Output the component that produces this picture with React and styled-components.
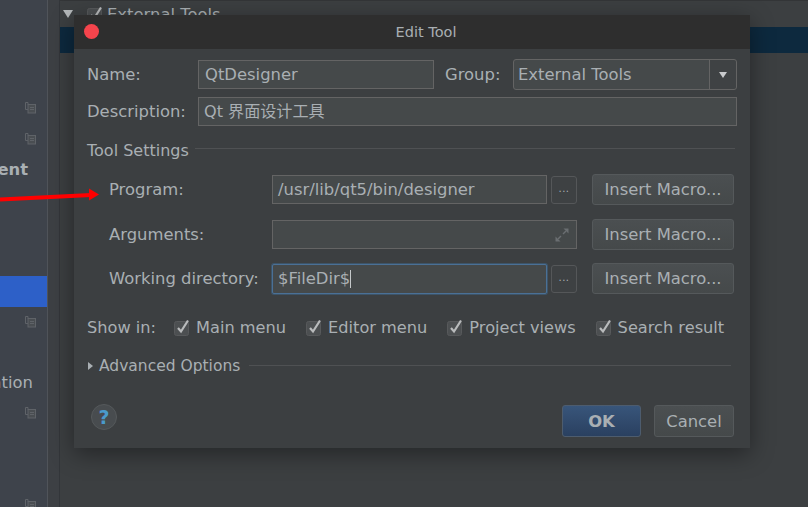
import React from 'react';
import styled, { createGlobalStyle } from 'styled-components';

const GlobalStyle = createGlobalStyle`
  html, body { margin: 0; padding: 0; background: #3c3f41; }
  body { font-family: "DejaVu Sans", "Noto Sans CJK SC", sans-serif; }
`;

const Page = styled.div`
  position: relative;
  display: flex;
  width: 808px;
  height: 507px;
  overflow: hidden;
  background: #3c3f41;
  color: #a9afb3;
  font-size: 16.4px;
`;

const Sidebar = styled.div`
  box-sizing: border-box;
  flex: 0 0 48px;
  min-width: 0;
  padding-top: 93px;
  background: #3e434b;
  border-right: 1px solid #50545a;
`;

const SideRow = styled.div`
  display: flex;
  justify-content: flex-end;
  align-items: center;
  height: 30.5px;
  padding-right: ${(p) => p.$right}px;
  overflow: hidden;
  white-space: nowrap;
  font-weight: ${(p) => (p.$bold ? 700 : 400)};
  background: ${(p) => (p.$selected ? '#2d60c8' : 'transparent')};
`;

const Gutter = styled.div`
  box-sizing: border-box;
  flex: 0 0 12px;
  border-right: 1px solid #33363a;
  background: #3d4044;
`;

const Main = styled.div`
  flex: 1;
  min-width: 0;
  border-top: 1px solid #333537;
`;

const TreeRow = styled.div`
  display: flex;
  align-items: center;
  gap: 4px;
  height: 26px;
  padding-left: 3px;
`;

const TreeArrow = styled.span`
  width: 0;
  height: 0;
  margin-right: 10px;
  border-left: 5px solid transparent;
  border-right: 5px solid transparent;
  border-top: 8px solid #b4b8ba;
`;

const SelectedRow = styled.div`
  height: 26px;
  background: #0d293e;
`;

const Arrow = styled.svg`
  position: absolute;
  left: 0;
  top: 185px;
`;

const Dialog = styled.div`
  position: absolute;
  left: 74px;
  top: 15px;
  width: 676px;
  height: 433px;
  display: flex;
  flex-direction: column;
  background: #3c3f41;
  box-shadow: 0 6px 22px rgba(0, 0, 0, 0.4);
`;

const TitleBar = styled.div`
  position: relative;
  box-sizing: border-box;
  flex: 0 0 34px;
  display: flex;
  align-items: center;
  justify-content: center;
  padding-left: 28px;
  background: #2e2e2e;
  font-size: 14.5px;
`;

const CloseDot = styled.span`
  position: absolute;
  left: 10px;
  top: 9px;
  width: 15px;
  height: 15px;
  border-radius: 50%;
  background: #f5444c;
`;

const Form = styled.div`
  flex: 1;
  display: flex;
  flex-direction: column;
  padding: 10px 13px 10px;
`;

const Row = styled.div`
  display: flex;
  align-items: center;
  height: 31px;
  margin-top: ${(p) => p.$top || 0}px;
`;

const Label = styled.span`
  flex: 0 0 ${(p) => p.$width}px;
  margin-left: ${(p) => p.$left || 0}px;
  white-space: nowrap;
`;

const Input = styled.div`
  position: relative;
  box-sizing: border-box;
  display: flex;
  align-items: center;
  flex: ${(p) => (p.$width ? `0 0 ${p.$width}px` : '1')};
  height: ${(p) => (p.$focused ? 30 : 29)}px;
  padding-left: ${(p) => (p.$width === 236 ? 6 : 5)}px;
  padding-bottom: ${(p) => p.$lift || 0}px;
  background: #45494a;
  border: 1px solid ${(p) => (p.$focused ? '#4a7096' : '#646464')};
  border-radius: ${(p) => (p.$focused ? '2px' : 0)};
  box-shadow: ${(p) => (p.$focused ? '0 0 0 1px #3d5468' : 'none')};
  font-size: ${(p) => p.$size || 16.4}px;
  white-space: nowrap;
`;

const Caret = styled.span`
  width: 1px;
  height: 18px;
  background: #c4c8ca;
`;

const Select = styled.div`
  box-sizing: border-box;
  flex: 1;
  display: flex;
  align-items: center;
  height: 31px;
  background: #45494a;
  border: 1px solid #646464;
  border-radius: 3px;
  padding-left: 4px;
`;

const SelectValue = styled.span`
  flex: 1;
`;

const SelectButton = styled.span`
  flex: 0 0 26px;
  align-self: stretch;
  display: flex;
  align-items: center;
  justify-content: center;
  background: #3f4244;
  border-left: 1px solid #646464;
  border-radius: 0 3px 3px 0;

  &::after {
    content: '';
    border-left: 4.5px solid transparent;
    border-right: 4.5px solid transparent;
    border-top: 6px solid #c8cacc;
  }
`;

const SectionTitle = styled.div`
  display: flex;
  align-items: center;
  height: 20px;
  margin-top: ${(p) => p.$top}px;
  margin-right: ${(p) => p.$right}px;
  font-size: ${(p) => p.$size}px;
  white-space: nowrap;

  &::after {
    content: '';
    flex: 1;
    height: 1px;
    margin-left: ${(p) => p.$gap}px;
    margin-top: ${(p) => p.$lineShift}px;
    background: #4f5153;
  }
`;

const Expander = styled.span`
  width: 0;
  height: 0;
  margin: 0 6px 0 1px;
  border-top: 4px solid transparent;
  border-bottom: 4px solid transparent;
  border-left: 5px solid #a9afb3;
`;

const SettingsGrid = styled.div`
  display: grid;
  grid-template-columns: 148px 305px 142px;
  grid-auto-rows: 31px;
  column-gap: 15px;
  row-gap: 13.5px;
  align-items: center;
  margin-top: 14px;
  margin-left: 22px;
`;

const GridLabel = styled.span`
  white-space: nowrap;
`;

const FieldCell = styled.div`
  display: flex;
  align-items: center;
  gap: 4px;
`;

const DotsButton = styled.span`
  box-sizing: border-box;
  flex: 0 0 26px;
  height: 28px;
  display: flex;
  align-items: center;
  justify-content: center;
  border: 1px solid #555759;
  border-radius: 3px;
  background: #3e4143;
  font-size: 10px;
  letter-spacing: 0.5px;
  padding-bottom: 3px;
`;

const Button = styled.button`
  box-sizing: border-box;
  height: ${(p) => p.$height || 31}px;
  width: ${(p) => p.$width}px;
  margin-left: ${(p) => p.$left || 0}px;
  padding: 0;
  font: inherit;
  font-weight: ${(p) => (p.$primary ? 700 : 400)};
  color: #a9afb3;
  background: ${(p) =>
    p.$primary
      ? 'linear-gradient(#38557a, #2a4060)'
      : 'linear-gradient(#4b4f51, #45494a)'};
  border: 1px solid ${(p) => (p.$primary ? '#4d5c6e' : '#55595b')};
  border-radius: 3px;
  white-space: nowrap;
`;

const ShowRow = styled.div`
  display: flex;
  align-items: center;
  gap: 20px;
  height: 20px;
  margin-top: 23px;
  font-size: 16.2px;
`;

const ShowLabel = styled.span`
  flex: 0 0 67px;
  min-width: 0;
  white-space: nowrap;
`;

const CheckItem = styled.span`
  display: flex;
  align-items: center;
  gap: 6px;
  white-space: nowrap;
`;

const Footer = styled.div`
  display: flex;
  align-items: center;
  margin-top: auto;
  padding-right: 3px;
`;

const Help = styled.span`
  box-sizing: border-box;
  display: flex;
  align-items: center;
  justify-content: center;
  width: 26px;
  height: 26px;
  margin: 0 auto 8px 4px;
  border-radius: 50%;
  background: #484c4f;
  border: 1px solid #55595b;
  color: #4a9bcb;
  font-weight: 700;
  font-size: 19px;
`;

const CopyIcon = () => (
  <svg width="11" height="12" viewBox="0 0 11 12" fill="none" stroke="#5f6368">
    <path d="M3 2.5V.5H.5v7H3" />
    <rect x="3" y="2.5" width="7.5" height="8.5" fill="#4a4e52" />
    <path d="M5 5.5h4M5 7.5h4" />
  </svg>
);

const CheckBox = () => (
  <svg width="16" height="17" viewBox="0 0 16 17" fill="none">
    <rect x=".5" y="2.5" width="14" height="14" rx="2" fill="#4c4f51" stroke="#57595b" />
    <path d="M4 9l3 3.5L14 1.5" stroke="#b9bbbc" strokeWidth="2.2" />
  </svg>
);

const ExpandIcon = styled.svg`
  position: absolute;
  right: 6px;
  top: 6px;
`;

const sideRows = [
  { icon: true, right: 11 },
  { icon: true, right: 11 },
  { text: 'ent', bold: true, right: 19 },
  {},
  {},
  {},
  { selected: true },
  { icon: true, right: 11 },
  {},
  { text: 'ation', right: 14 },
  { icon: true, right: 11 },
  {},
  {},
  { icon: true, right: 11 },
];

const Macro = () => <Button $width={142}>Insert Macro...</Button>;

const Check = ({ children }) => (
  <CheckItem>
    <CheckBox />
    {children}
  </CheckItem>
);

export default function App() {
  return (
    <Page>
      <GlobalStyle />
      <Sidebar>
        {sideRows.map((row, index) => (
          <SideRow key={index} $selected={row.selected} $bold={row.bold} $right={row.right || 0}>
            {row.icon && <CopyIcon />}
            {row.text}
          </SideRow>
        ))}
      </Sidebar>
      <Gutter />
      <Main>
        <TreeRow>
          <TreeArrow />
          <CheckBox />
          External Tools
        </TreeRow>
        <SelectedRow />
      </Main>

      <Dialog>
        <TitleBar>
          <CloseDot />
          Edit Tool
        </TitleBar>
        <Form>
          <Row>
            <Label $width={111}>Name:</Label>
            <Input $width={236}>QtDesigner</Input>
            <Label $width={68} $left={11}>Group:</Label>
            <Select>
              <SelectValue>External Tools</SelectValue>
              <SelectButton />
            </Select>
          </Row>
          <Row $top={6}>
            <Label $width={111}>Description:</Label>
            <Input $lift={3} $size={16.1}>Qt 界面设计工具</Input>
          </Row>
          <SectionTitle $top={13} $gap={6} $right={2} $lineShift={-4} $size={16}>Tool Settings</SectionTitle>
          <SettingsGrid>
            <GridLabel>Program:</GridLabel>
            <FieldCell>
              <Input $width={275}>/usr/lib/qt5/bin/designer</Input>
              <DotsButton>...</DotsButton>
            </FieldCell>
            <Macro />
            <GridLabel>Arguments:</GridLabel>
            <FieldCell>
              <Input>
                <ExpandIcon width="16" height="16" viewBox="0 0 16 16" fill="none" stroke="#6a6e71" strokeWidth="1.5">
                  <path d="M9 7l3-3" />
                  <path d="M9.5 1.5h5v5z" fill="#6a6e71" stroke="none" />
                  <path d="M7 9l-3 3" />
                  <path d="M6.5 14.5h-5v-5z" fill="#6a6e71" stroke="none" />
                </ExpandIcon>
              </Input>
            </FieldCell>
            <Macro />
            <GridLabel>Working directory:</GridLabel>
            <FieldCell>
              <Input $width={275} $focused>
                $FileDir$<Caret />
              </Input>
              <DotsButton>...</DotsButton>
            </FieldCell>
            <Macro />
          </SettingsGrid>
          <ShowRow>
            <ShowLabel>Show in:</ShowLabel>
            <Check>Main menu</Check>
            <Check>Editor menu</Check>
            <Check>Project views</Check>
            <Check>Search result</Check>
          </ShowRow>
          <SectionTitle $top={19} $gap={9} $right={6} $lineShift={-2} $size={15.5}>
            <Expander />
            Advanced Options
          </SectionTitle>
          <Footer>
            <Help>?</Help>
            <Button $primary $width={79} $height={32}>OK</Button>
            <Button $width={80} $height={32} $left={13}>Cancel</Button>
          </Footer>
        </Form>
      </Dialog>

      <Arrow width="100" height="22" viewBox="0 0 100 22">
        <path d="M0 14.5L91 10" stroke="#f00" strokeWidth="4" />
        <path d="M99 9.5L89 3.5V15.5z" fill="#f00" />
      </Arrow>
    </Page>
  );
}
